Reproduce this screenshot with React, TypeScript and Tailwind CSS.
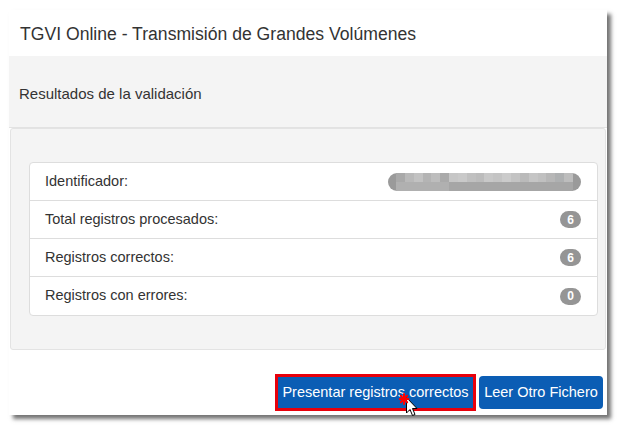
import React from "react";

const blocks = [
  "#a9a9a9", "#b9b9b9", "#c2c2c2", "#b4b4b4", "#bdbdbd", "#aaaaaa", "#c6c6c6", "#c9c9c9",
  "#c0c0c0", "#bcbcbc", "#c8c8c8", "#c4c4c4", "#cbcbcb", "#c3c3c3", "#bababa", "#c5c5c5",
  "#c0c0c0", "#b7b7b7", "#aeb0b1", "#bdbdbd",
];

function Badge({ v }: { v: string }) {
  return (
    <span className="inline-flex h-[17px] min-w-[21px] items-center justify-center rounded-full bg-[#959595] px-[6px] text-[12px] font-bold leading-none text-white">
      {v}
    </span>
  );
}

function Row({ label, right, last }: { label: string; right: React.ReactNode; last?: boolean }) {
  return (
    <div
      className={
        "flex h-[38px] items-center justify-between pl-[15px] pr-[16px] " +
        (last ? "" : "border-b border-[#dddddd]")
      }
    >
      <span className="text-[14.5px] text-[#333333]">{label}</span>
      {right}
    </div>
  );
}

export default function App() {
  return (
    <div className="relative h-[428px] w-[619px] overflow-hidden bg-white font-['Liberation_Sans',Arial,sans-serif]">
      <div className="ml-[9px] mt-[10px] flex h-[405px] w-[598px] flex-col bg-white shadow-[4px_4px_4px_rgba(0,0,0,0.55)]">
        <div className="flex h-[46px] items-center pl-[11px] pt-[3px] text-[17.6px] text-[#333333]">
          TGVI Online - Transmisión de Grandes Volúmenes
        </div>
        <div className="flex h-[72px] items-center border-b border-[#e2e2e2] bg-[#f4f4f4] pl-[10px] pt-[5px] text-[15px] text-[#333333]">
          Resultados de la validación
        </div>
        <div className="ml-[1px] mr-[1px] h-[222px] rounded-[3px] border border-[#e3e3e3] bg-[#f4f4f4] pl-[18px] pr-[7px] pt-[33px]">
          <div className="rounded-[4px] border border-[#dddddd] bg-white">
            <Row
              label="Identificador:"
              right={
                <span className="flex h-[18px] w-[193px] items-stretch overflow-hidden rounded-full bg-[#9a9a9a] px-[8px]">
                  {blocks.map((c, i) => (
                    <span key={i} className="flex flex-1 flex-col">
                      <span className="flex-1" style={{ backgroundColor: c }} />
                      <span className="flex-1" style={{ backgroundColor: i < 6 ? "#b0b0b0" : "#a6a6a6" }} />
                    </span>
                  ))}
                </span>
              }
            />
            <Row label="Total registros procesados:" right={<Badge v="6" />} />
            <Row label="Registros correctos:" right={<Badge v="6" />} />
            <Row label="Registros con errores:" right={<Badge v="0" />} last />
          </div>
        </div>
        <div className="flex justify-end gap-[3px] pr-[4px] pt-[24px]">
          <div className="border-[3px] border-[#e8000b]">
            <button className="h-[31px] w-[195px] bg-[#0b5db4] text-[14.5px] text-white">
              Presentar registros correctos
            </button>
          </div>
          <button className="mt-[2px] h-[33px] w-[124px] rounded-[4px] bg-[#0b5db4] text-[14.5px] text-white">
            Leer Otro Fichero
          </button>
        </div>
      </div>
      <svg className="absolute left-[399px] top-[393px]" width="22" height="28" viewBox="0 0 22 28">
        <path
          d="M7.5 4.5 L7.5 20 L11 16.5 L13.5 22.5 L16 21.5 L13.5 15.5 L18 15.5 Z"
          fill="white"
          stroke="black"
          strokeWidth="1"
          strokeLinejoin="miter"
        />
        <g stroke="#ff0000" strokeWidth="2" strokeLinecap="round">
          <line x1="5" y1="1" x2="5" y2="11" />
          <line x1="0.5" y1="6" x2="9.5" y2="6" />
          <line x1="1.8" y1="2.8" x2="8.2" y2="9.2" />
          <line x1="8.2" y1="2.8" x2="1.8" y2="9.2" />
        </g>
      </svg>
    </div>
  );
}
